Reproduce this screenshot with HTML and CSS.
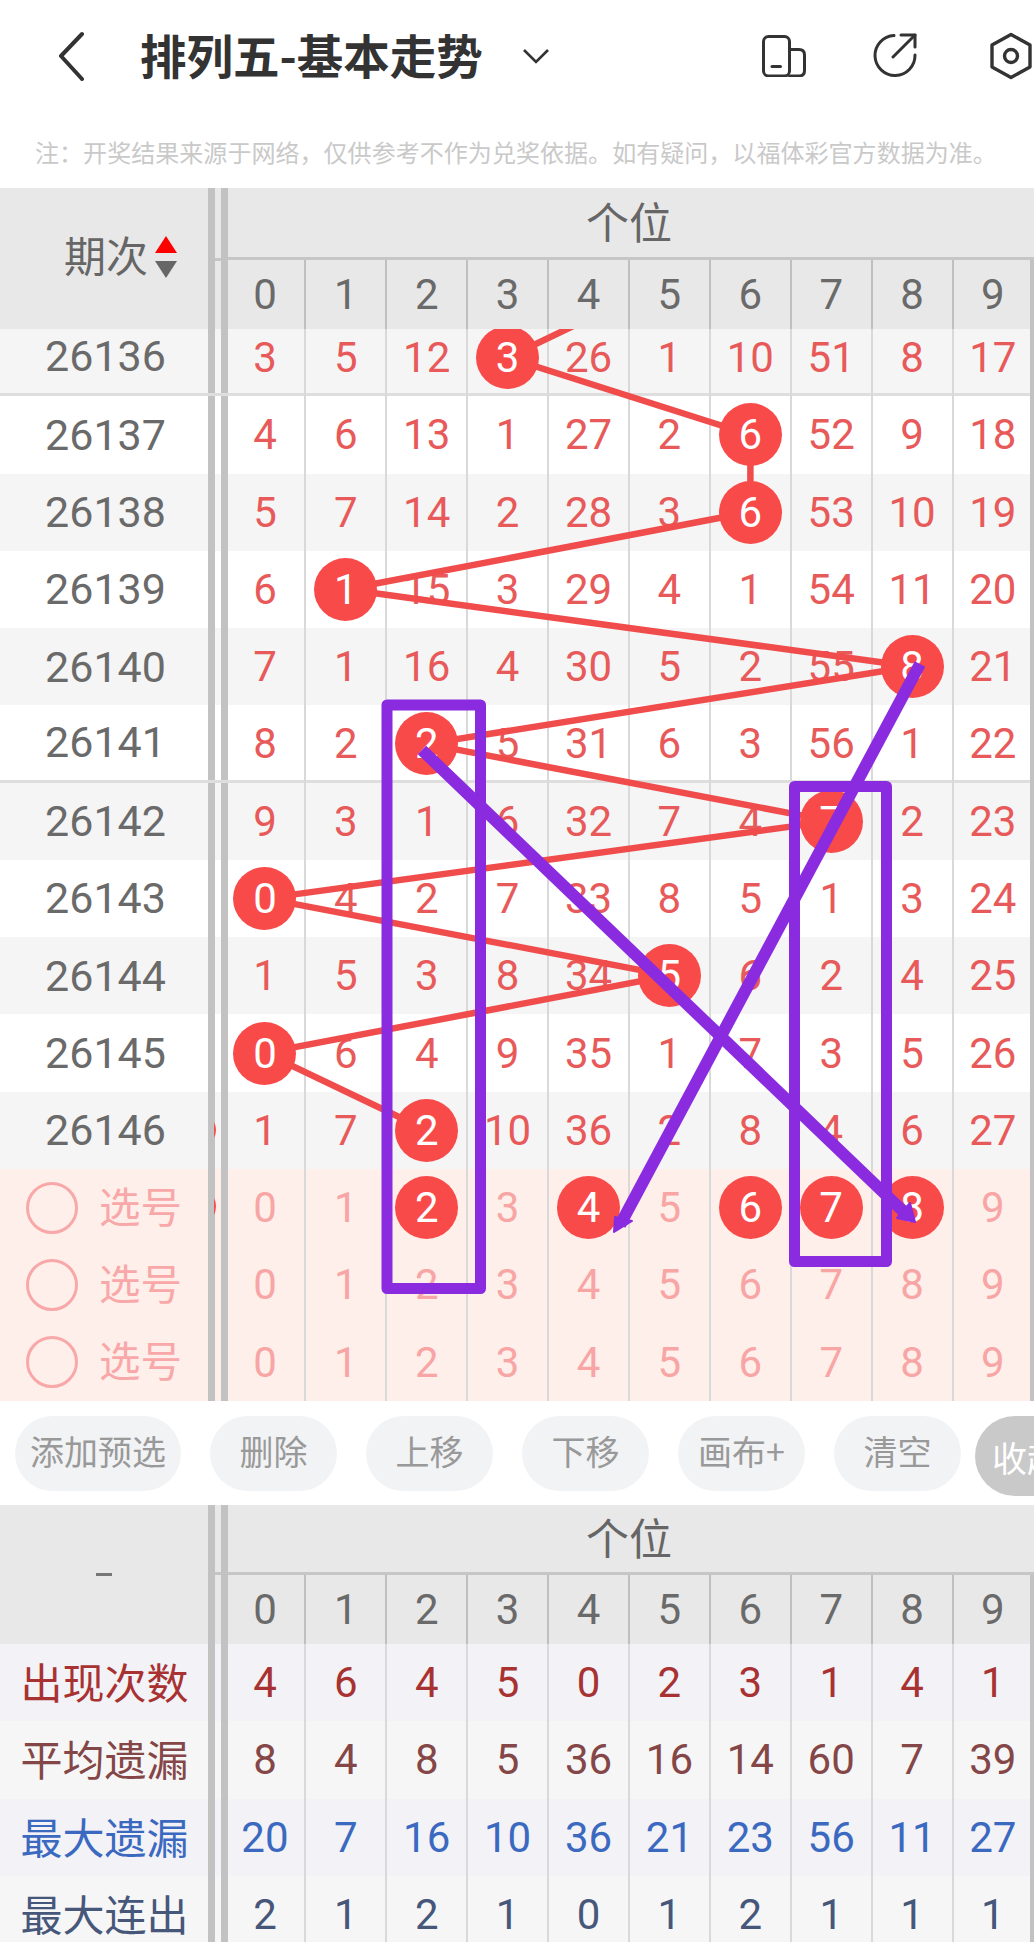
FILE: index.html
```html
<!DOCTYPE html>
<html lang="zh">
<head>
<meta charset="utf-8">
<title>排列五-基本走势</title>
<link rel="stylesheet" href="styles.css">
</head>
<body>
<div class="page">
  <header class="topbar">
    <svg class="ico-back" viewBox="0 0 30 50"><path d="M26 3 L5 25 L26 48"/></svg>
    <h1 class="title">排列五-基本走势</h1>
    <svg class="ico-drop" viewBox="0 0 28 16"><path d="M2 2 L14 14 L26 2"/></svg>
    <svg class="ico-top ico-device" viewBox="0 0 44 42"><rect x="1.5" y="1.5" width="26" height="39.5" rx="5"/><path d="M27.5 14.5 H37 Q42.5 14.5 42.5 20 V35.5 Q42.5 41 37 41 H27.5"/><path d="M10 31.5 H18.5"/></svg>
    <svg class="ico-top ico-share" viewBox="0 0 46 46"><path d="M23 2.5 A20 20 0 1 0 44 22"/><path d="M22 24 L44 2"/><path d="M30 2 H44 V14"/></svg>
    <svg class="ico-top ico-gear" viewBox="0 0 46 50"><path d="M23 3.5 L42 14 V36 L23 46.5 L4 36 V14 Z"/><circle cx="23" cy="25" r="6.5"/></svg>
  </header>
  <p class="notice">注&#xFF1A;开奖结果来源于网络&#xFF0C;仅供参考不作为兑奖依据。如有疑问&#xFF0C;以福体彩官方数据为准。</p>

  <section class="trend">
    <div class="thead">
      <div class="corner"><span>期次</span><span class="sort"><i class="up"></i><i class="down"></i></span></div>
      <div class="bar"></div><div class="gap"></div><div class="bar"></div>
      <div class="hcols">
        <div class="hgroup">个位</div>
        <div class="digits"><div class="digit">0</div><div class="digit">1</div><div class="digit">2</div><div class="digit">3</div><div class="digit">4</div><div class="digit">5</div><div class="digit">6</div><div class="digit">7</div><div class="digit">8</div><div class="digit">9</div></div>
      </div>
    </div>
    <div class="tbody">
      <div class="rows">
        <div class="row alt ruled"><div class="left"><span class="issue">26136</span></div><div class="bar"></div><div class="gap"></div><div class="bar"></div><div class="cols"><div class="cell">3</div><div class="cell">5</div><div class="cell">12</div><div class="cell"><span class="ball">3</span></div><div class="cell">26</div><div class="cell">1</div><div class="cell">10</div><div class="cell">51</div><div class="cell">8</div><div class="cell">17</div></div></div>
        <div class="row"><div class="left"><span class="issue">26137</span></div><div class="bar"></div><div class="gap"></div><div class="bar"></div><div class="cols"><div class="cell">4</div><div class="cell">6</div><div class="cell">13</div><div class="cell">1</div><div class="cell">27</div><div class="cell">2</div><div class="cell"><span class="ball">6</span></div><div class="cell">52</div><div class="cell">9</div><div class="cell">18</div></div></div>
        <div class="row alt"><div class="left"><span class="issue">26138</span></div><div class="bar"></div><div class="gap"></div><div class="bar"></div><div class="cols"><div class="cell">5</div><div class="cell">7</div><div class="cell">14</div><div class="cell">2</div><div class="cell">28</div><div class="cell">3</div><div class="cell"><span class="ball">6</span></div><div class="cell">53</div><div class="cell">10</div><div class="cell">19</div></div></div>
        <div class="row"><div class="left"><span class="issue">26139</span></div><div class="bar"></div><div class="gap"></div><div class="bar"></div><div class="cols"><div class="cell">6</div><div class="cell"><span class="ball">1</span></div><div class="cell">15</div><div class="cell">3</div><div class="cell">29</div><div class="cell">4</div><div class="cell">1</div><div class="cell">54</div><div class="cell">11</div><div class="cell">20</div></div></div>
        <div class="row alt"><div class="left"><span class="issue">26140</span></div><div class="bar"></div><div class="gap"></div><div class="bar"></div><div class="cols"><div class="cell">7</div><div class="cell">1</div><div class="cell">16</div><div class="cell">4</div><div class="cell">30</div><div class="cell">5</div><div class="cell">2</div><div class="cell">55</div><div class="cell"><span class="ball">8</span></div><div class="cell">21</div></div></div>
        <div class="row ruled"><div class="left"><span class="issue">26141</span></div><div class="bar"></div><div class="gap"></div><div class="bar"></div><div class="cols"><div class="cell">8</div><div class="cell">2</div><div class="cell"><span class="ball">2</span></div><div class="cell">5</div><div class="cell">31</div><div class="cell">6</div><div class="cell">3</div><div class="cell">56</div><div class="cell">1</div><div class="cell">22</div></div></div>
        <div class="row alt"><div class="left"><span class="issue">26142</span></div><div class="bar"></div><div class="gap"></div><div class="bar"></div><div class="cols"><div class="cell">9</div><div class="cell">3</div><div class="cell">1</div><div class="cell">6</div><div class="cell">32</div><div class="cell">7</div><div class="cell">4</div><div class="cell"><span class="ball">7</span></div><div class="cell">2</div><div class="cell">23</div></div></div>
        <div class="row"><div class="left"><span class="issue">26143</span></div><div class="bar"></div><div class="gap"></div><div class="bar"></div><div class="cols"><div class="cell"><span class="ball">0</span></div><div class="cell">4</div><div class="cell">2</div><div class="cell">7</div><div class="cell">33</div><div class="cell">8</div><div class="cell">5</div><div class="cell">1</div><div class="cell">3</div><div class="cell">24</div></div></div>
        <div class="row alt"><div class="left"><span class="issue">26144</span></div><div class="bar"></div><div class="gap"></div><div class="bar"></div><div class="cols"><div class="cell">1</div><div class="cell">5</div><div class="cell">3</div><div class="cell">8</div><div class="cell">34</div><div class="cell"><span class="ball">5</span></div><div class="cell">6</div><div class="cell">2</div><div class="cell">4</div><div class="cell">25</div></div></div>
        <div class="row"><div class="left"><span class="issue">26145</span></div><div class="bar"></div><div class="gap"></div><div class="bar"></div><div class="cols"><div class="cell"><span class="ball">0</span></div><div class="cell">6</div><div class="cell">4</div><div class="cell">9</div><div class="cell">35</div><div class="cell">1</div><div class="cell">7</div><div class="cell">3</div><div class="cell">5</div><div class="cell">26</div></div></div>
        <div class="row alt"><div class="left"><span class="issue">26146</span></div><div class="bar"></div><div class="gap"></div><div class="bar"></div><div class="cols"><div class="cell">1</div><div class="cell">7</div><div class="cell"><span class="ball">2</span></div><div class="cell">10</div><div class="cell">36</div><div class="cell">2</div><div class="cell">8</div><div class="cell">4</div><div class="cell">6</div><div class="cell">27</div></div></div>
        <div class="row sel"><div class="left"><span class="pick"><i class="ring"></i><span>选号</span></span></div><div class="bar"></div><div class="gap"></div><div class="bar"></div><div class="cols"><div class="cell">0</div><div class="cell">1</div><div class="cell"><span class="ball">2</span></div><div class="cell">3</div><div class="cell"><span class="ball">4</span></div><div class="cell">5</div><div class="cell"><span class="ball">6</span></div><div class="cell"><span class="ball">7</span></div><div class="cell"><span class="ball">8</span></div><div class="cell">9</div></div></div>
        <div class="row sel"><div class="left"><span class="pick"><i class="ring"></i><span>选号</span></span></div><div class="bar"></div><div class="gap"></div><div class="bar"></div><div class="cols"><div class="cell">0</div><div class="cell">1</div><div class="cell">2</div><div class="cell">3</div><div class="cell">4</div><div class="cell">5</div><div class="cell">6</div><div class="cell">7</div><div class="cell">8</div><div class="cell">9</div></div></div>
        <div class="row sel"><div class="left"><span class="pick"><i class="ring"></i><span>选号</span></span></div><div class="bar"></div><div class="gap"></div><div class="bar"></div><div class="cols"><div class="cell">0</div><div class="cell">1</div><div class="cell">2</div><div class="cell">3</div><div class="cell">4</div><div class="cell">5</div><div class="cell">6</div><div class="cell">7</div><div class="cell">8</div><div class="cell">9</div></div></div>
      </div>
      <svg class="overlay red" viewBox="0 0 1034 1082">
        <polyline points="669,-39 507.7,38.5 750.4,115.77 750.4,193.04 345.9,270.31 912.2,347.58 426.8,424.85 831.3,502.12 265,579.39 669.5,656.66 265,733.93 426.8,811.2"/>
        <path class="frag" d="M214 803 Q218 811 214 819 Z"/>
        <path class="frag" d="M214 879 Q218 887 214 896 Z"/>
      </svg>
      <svg class="overlay purple" viewBox="0 0 1034 1082">
        <rect x="387" y="386" width="93.5" height="583.5"/>
        <rect x="794.5" y="467.5" width="92" height="475"/>
        <path class="stroke" d="M422 431 L908 897"/>
        <path class="stroke" d="M920 345 L620 906"/>
        <path class="head" d="M915 903 L897 899 L910 884 Z"/>
        <path class="head" d="M614 913 L632 902 L615 898 Z"/>
      </svg>
    </div>
  </section>

  <nav class="toolbar">
    <button class="pill">添加预选</button>
    <button class="pill">删除</button>
    <button class="pill">上移</button>
    <button class="pill">下移</button>
    <button class="pill">画布+</button>
    <button class="pill">清空</button>
    <button class="fold">收起</button>
  </nav>

  <section class="stats">
    <div class="thead thead-b">
      <div class="corner corner-b"><span class="dash"></span></div>
      <div class="bar"></div><div class="gap"></div><div class="bar"></div>
      <div class="hcols">
        <div class="hgroup">个位</div>
        <div class="digits"><div class="digit">0</div><div class="digit">1</div><div class="digit">2</div><div class="digit">3</div><div class="digit">4</div><div class="digit">5</div><div class="digit">6</div><div class="digit">7</div><div class="digit">8</div><div class="digit">9</div></div>
      </div>
    </div>
    <div class="row stat s-red"><div class="left"><span class="label">出现次数</span></div><div class="bar"></div><div class="gap"></div><div class="bar"></div><div class="cols"><div class="cell">4</div><div class="cell">6</div><div class="cell">4</div><div class="cell">5</div><div class="cell">0</div><div class="cell">2</div><div class="cell">3</div><div class="cell">1</div><div class="cell">4</div><div class="cell">1</div></div></div>
    <div class="row stat s-brown"><div class="left"><span class="label">平均遗漏</span></div><div class="bar"></div><div class="gap"></div><div class="bar"></div><div class="cols"><div class="cell">8</div><div class="cell">4</div><div class="cell">8</div><div class="cell">5</div><div class="cell">36</div><div class="cell">16</div><div class="cell">14</div><div class="cell">60</div><div class="cell">7</div><div class="cell">39</div></div></div>
    <div class="row stat s-blue"><div class="left"><span class="label">最大遗漏</span></div><div class="bar"></div><div class="gap"></div><div class="bar"></div><div class="cols"><div class="cell">20</div><div class="cell">7</div><div class="cell">16</div><div class="cell">10</div><div class="cell">36</div><div class="cell">21</div><div class="cell">23</div><div class="cell">56</div><div class="cell">11</div><div class="cell">27</div></div></div>
    <div class="row stat s-slate"><div class="left"><span class="label">最大连出</span></div><div class="bar"></div><div class="gap"></div><div class="bar"></div><div class="cols"><div class="cell">2</div><div class="cell">1</div><div class="cell">2</div><div class="cell">1</div><div class="cell">0</div><div class="cell">1</div><div class="cell">2</div><div class="cell">1</div><div class="cell">1</div><div class="cell">1</div></div></div>
  </section>
</div>
</body>
</html>
```
FILE: styles.css
```css
* { box-sizing: border-box; margin: 0; padding: 0; }
html, body { background: #fff; }
body { font-family: Roboto, "Noto Sans CJK SC", sans-serif; color: #666; width: 1034px; height: 1942px; overflow: hidden; }
.page { width: 1034px; height: 1942px; overflow: hidden; }

.topbar { height: 110px; display: flex; align-items: center; padding: 2px 0 0 56px; }
.ico-back { width: 30px; height: 50px; fill: none; stroke: #333; stroke-width: 4; stroke-linecap: round; stroke-linejoin: round; flex: none; }
.title { font: 700 46.5px/1 "Noto Sans CJK SC", sans-serif; color: #333; margin: 0 0 4px 54px; white-space: nowrap; }
.ico-drop { width: 28px; height: 16px; margin-left: 39px; fill: none; stroke: #333; stroke-width: 2.6; flex: none; }
.ico-top { fill: none; stroke: #333; stroke-width: 3; stroke-linecap: round; stroke-linejoin: round; flex: none; }
.ico-device { width: 44px; height: 42px; margin-left: auto; }
.ico-share { width: 46px; height: 46px; margin-left: 65px; }
.ico-gear { width: 46px; height: 50px; margin-left: 71px; stroke-width: 3.4; }

.notice { height: 78px; padding: 25px 0 0 35px; font: 400 24.06px/34px "Noto Sans CJK SC", sans-serif; color: #c9c9c9; white-space: nowrap; }

.trend { position: relative; }
.thead { display: flex; height: 141px; background: #e8e8e8; position: relative; z-index: 5; }
.thead-b { height: 139px; }
.corner { width: 208px; flex: none; display: flex; align-items: center; justify-content: flex-end; padding: 0 31px 10px 0; font: 400 42px/1 "Noto Sans CJK SC", sans-serif; color: #666; }
.corner-b { justify-content: center; padding: 0; }
.sort { display: flex; flex-direction: column; gap: 8px; margin: 6px 0 0 7px; }
.sort i { display: block; width: 0; height: 0; border-left: 11px solid transparent; border-right: 11px solid transparent; }
.sort .up { border-bottom: 17px solid #f00; }
.sort .down { border-top: 17px solid #666; }
.dash { display: block; width: 16px; height: 3px; background: #777; }
.bar { width: 7px; flex: none; background: #c2c2c2; }
.gap { width: 6px; flex: none; }
.thead > .gap { background: linear-gradient(#e8e8e8 0 70px, #c6c6c6 70px 73px, #e8e8e8 73px); }
.thead-b > .gap { background: linear-gradient(#e8e8e8 0 67px, #c6c6c6 67px 70px, #e8e8e8 70px); }
.hcols { flex: 1; min-width: 0; display: flex; flex-direction: column; }
.hgroup { height: 72px; border-bottom: 3px solid #c6c6c6; display: flex; align-items: center; justify-content: center; font: 400 43px/1 "Noto Sans CJK SC", sans-serif; color: #666; padding: 0 4px 4px 0; flex: none; }
.thead-b .hgroup { height: 70px; padding-bottom: 5px; }
.digits { flex: 1; margin-left: -2.5px; display: grid; grid-template-columns: repeat(9, 80.9px) 1fr; }
.digit { display: flex; align-items: center; justify-content: center; font-size: 42px; color: #6a6a6a; border-right: 2px solid #bfbfbf; }
.digit:last-child { border-right: 4px solid #c2c2c2; padding-left: 2px; }

.tbody { position: relative; height: 1072px; overflow: hidden; }
.rows { margin-top: -10px; }
.row { display: flex; height: 77.27px; background: #fff; }
.row.alt { background: #f5f5f5; }
.row.ruled { border-bottom: 3px solid #dedede; }
.row.ruled .cols { margin-bottom: -3px; }
.left { width: 208px; flex: none; display: flex; align-items: center; justify-content: center; }
.issue { font-size: 43px; color: #6a6a6a; margin-left: 3px; }
.cols { flex: 1; min-width: 0; margin-left: -2.5px; display: grid; grid-template-columns: repeat(9, 80.9px) 1fr; }
.cell { display: flex; align-items: center; justify-content: center; font-size: 42px; color: #e85a5a; border-right: 2px solid #d9d9d9; }
.cell:last-child { border-right: 4px solid #c2c2c2; padding-left: 2px; }

.row.sel { background: #ffefea; }
.sel .cell { color: #f8a5a5; }
.pick { display: flex; align-items: center; gap: 21px; font: 400 41.5px/1 "Noto Sans CJK SC", sans-serif; color: #f8a8a8; }
.pick span { margin-bottom: 4px; }
.ring { display: block; width: 52px; height: 52px; border-radius: 50%; border: 3px solid #f8a8a8; }

.overlay { position: absolute; left: 0; top: -10px; width: 1034px; height: 1082px; fill: none; pointer-events: none; }
.overlay.red { z-index: 1; }
.overlay.red polyline { stroke: #f04c4c; stroke-width: 6.5; }
.overlay.red .frag { fill: #f94a4a; }
.ball { position: relative; z-index: 2; width: 63px; height: 63px; border-radius: 50%; background: #f94a4a; color: #fff; font-size: 42px; line-height: 63px; text-align: center; flex: none; }
.overlay.purple { z-index: 3; stroke: #8a2be0; stroke-width: 11; stroke-linejoin: round; }
.overlay.purple .stroke { stroke-width: 12; }
.overlay.purple .head { fill: #8a2be0; stroke-width: 2; }

.toolbar { height: 104px; display: flex; align-items: flex-start; gap: 29px; padding: 15px 0 0 15px; overflow: hidden; background: #fff; }
.pill { flex: none; min-width: 127px; height: 75px; padding: 0 15px 6px; border: 0; border-radius: 38px; background: #f2f3f5; color: #999; font: 400 34px/1 "Noto Sans CJK SC", sans-serif; }
.fold { flex: none; width: 80px; height: 80px; margin-left: -15px; border: 0; border-radius: 40px 0 0 40px; background: #c9c9c9; color: #fff; font: 400 35px/1 "Noto Sans CJK SC", sans-serif; white-space: nowrap; overflow: hidden; text-align: left; padding-left: 17px; }

.stat { background: #f6f6f7; }
.stat.s-red, .stat.s-blue { background: #f2f2f7; }
.label { font: 400 42px/1 "Noto Sans CJK SC", sans-serif; margin: 0 0 3px 1px; }
.s-red .label, .s-red .cell { color: #a83232; }
.s-brown .label, .s-brown .cell { color: #844646; }
.s-blue .label, .s-blue .cell { color: #3b69c0; }
.s-slate .label, .s-slate .cell { color: #47577a; }
```
